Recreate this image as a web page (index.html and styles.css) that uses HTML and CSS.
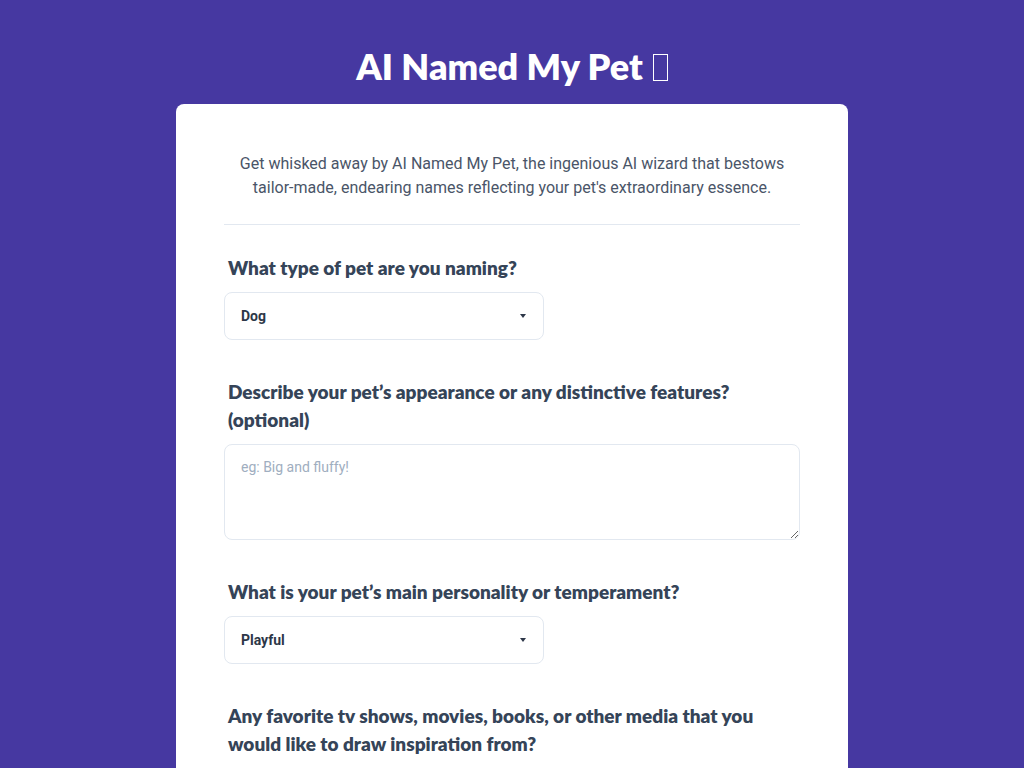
FILE: index.html
```html
<!DOCTYPE html>
<html lang="en">
<head>
<meta charset="utf-8">
<title>AI Named My Pet</title>
<link rel="stylesheet" href="styles.css">
</head>
<body>
<main class="page">
  <h1 class="title">AI Named My Pet <span class="tofu"></span></h1>
  <section class="card">
    <p class="intro">Get whisked away by AI Named My Pet, the ingenious AI wizard that bestows tailor-made, endearing names reflecting your pet's extraordinary essence.</p>
    <hr class="divider">
    <form class="form">
      <div class="field">
        <label class="label" for="type">What type of pet are you naming?</label>
        <div class="select-wrap">
          <select id="type" class="select">
            <option>Dog</option>
            <option>Cat</option>
            <option>Bird</option>
          </select>
          <span class="caret"></span>
        </div>
      </div>
      <div class="field">
        <label class="label" for="look">Describe your pet’s appearance or any distinctive features? (optional)</label>
        <textarea id="look" class="textarea" placeholder="eg: Big and fluffy!"></textarea>
      </div>
      <div class="field">
        <label class="label" for="mood">What is your pet’s main personality or temperament?</label>
        <div class="select-wrap">
          <select id="mood" class="select">
            <option>Playful</option>
            <option>Calm</option>
            <option>Curious</option>
          </select>
          <span class="caret"></span>
        </div>
      </div>
      <div class="field">
        <label class="label" for="media">Any favorite tv shows, movies, books, or other media that you would like to draw inspiration from?</label>
        <textarea id="media" class="textarea" placeholder="eg: Star Wars"></textarea>
      </div>
    </form>
  </section>
</main>
</body>
</html>
```
FILE: styles.css
```css
html, body {
  margin: 0;
  padding: 0;
}
body {
  background: #4638a1;
  font-family: Roboto, "Liberation Sans", sans-serif;
}
.page {
  display: flex;
  flex-direction: column;
  align-items: center;
  padding-top: 42px;
}
.title {
  margin: 0 0 14px;
  font-family: Lato, "Open Sans", sans-serif;
  font-weight: 800;
  font-size: 36px;
  line-height: 48px;
  color: #ffffff;
  display: flex;
  align-items: center;
  gap: 10px;
}
.tofu {
  display: inline-block;
  width: 13px;
  height: 25px;
  border: 1.5px solid #ffffff;
  margin-top: 2px;
}
.card {
  width: 576px;
  background: #ffffff;
  border-radius: 8px;
  padding: 48px 48px 48px;
}
.intro {
  margin: 0;
  text-align: center;
  font-size: 16px;
  line-height: 24px;
  color: #4a5568;
}
.divider {
  border: 0;
  border-top: 1px solid #e2e8f0;
  margin: 24px 0 29px;
}
.form {
  display: flex;
  flex-direction: column;
  gap: 38px;
}
.field {
  display: flex;
  flex-direction: column;
  gap: 10px;
}
.label {
  font-family: Lato, "Open Sans", sans-serif;
  font-weight: 800;
  font-size: 19px;
  line-height: 28px;
  color: #354458;
  padding-left: 4px;
}
.select-wrap {
  position: relative;
  width: 320px;
}
.select {
  -webkit-appearance: none;
  appearance: none;
  width: 100%;
  height: 48px;
  box-sizing: border-box;
  border: 1px solid #e2e8f0;
  border-radius: 8px;
  background: #ffffff;
  padding: 0 16px;
  font-family: Roboto, "Liberation Sans", sans-serif;
  font-weight: 700;
  font-size: 14px;
  color: #2d3748;
  outline: none;
}
.caret {
  position: absolute;
  right: 18px;
  top: 22px;
  width: 0;
  height: 0;
  border-left: 3.5px solid transparent;
  border-right: 3.5px solid transparent;
  border-top: 4px solid #2d3748;
  pointer-events: none;
}
.textarea {
  width: 100%;
  height: 96px;
  box-sizing: border-box;
  border: 1px solid #e2e8f0;
  border-radius: 8px;
  padding: 12px 16px;
  font-family: Roboto, "Liberation Sans", sans-serif;
  font-size: 14px;
  line-height: 20px;
  color: #2d3748;
  outline: none;
}
.textarea::placeholder {
  color: #a0aec0;
}
```
